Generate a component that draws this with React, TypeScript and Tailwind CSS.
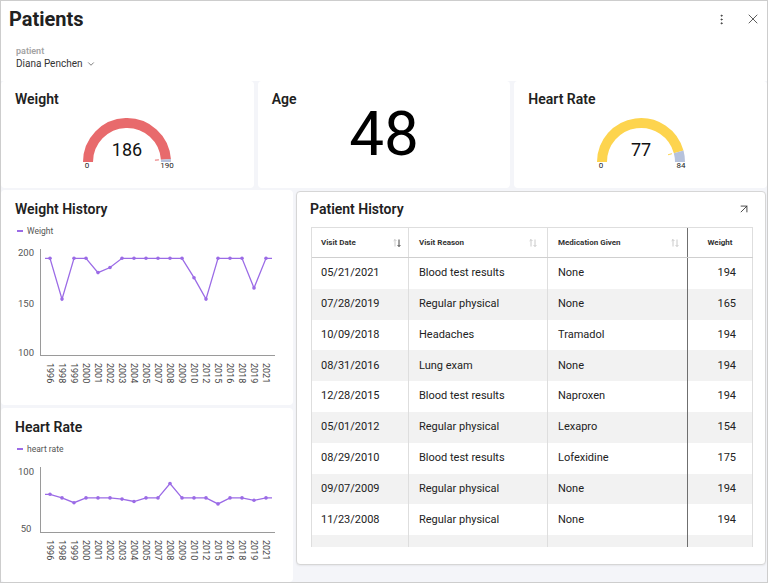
import { ArrowUpRight, EllipsisVertical, X, ChevronDown } from 'lucide-react'

const years = ['1996', '1998', '1999', '2000', '2001', '2002', '2003', '2004', '2005', '2007', '2008', '2009', '2010', '2012', '2015', '2016', '2018', '2019', '2021']
const weights = [194, 154, 194, 194, 180, 185, 194, 194, 194, 194, 194, 194, 175, 154, 194, 194, 194, 165, 194]
const heartRates = [80, 77, 73, 77, 77, 77, 76, 74, 77, 77, 89, 77, 77, 77, 72, 77, 77, 75, 77]

const visits = [
  ['05/21/2021', 'Blood test results', 'None', '194'],
  ['07/28/2019', 'Regular physical', 'None', '165'],
  ['10/09/2018', 'Headaches', 'Tramadol', '194'],
  ['08/31/2016', 'Lung exam', 'None', '194'],
  ['12/28/2015', 'Blood test results', 'Naproxen', '194'],
  ['05/01/2012', 'Regular physical', 'Lexapro', '154'],
  ['08/29/2010', 'Blood test results', 'Lofexidine', '175'],
  ['09/07/2009', 'Regular physical', 'None', '194'],
  ['11/23/2008', 'Regular physical', 'None', '194'],
  ['', '', '', ''],
]

function Gauge({ value, max, color }: { value: number; max: number; color: string }) {
  const cx = 55
  const cy = 50
  const r = 39
  const t = Math.PI * (1 - value / max)
  const vx = cx + r * Math.cos(t)
  const vy = cy - r * Math.sin(t)
  const tick = (rad: number) => [cx + rad * Math.cos(t), cy - rad * Math.sin(t)]
  const [ax, ay] = tick(28)
  const [bx, by] = tick(32)
  return (
    <svg width="110" height="60" viewBox="0 0 110 60">
      <path d={`M ${cx - r} ${cy} A ${r} ${r} 0 0 1 ${vx} ${vy}`} fill="none" stroke={color} strokeWidth="10" />
      <path d={`M ${vx} ${vy} A ${r} ${r} 0 0 1 ${cx + r} ${cy}`} fill="none" stroke="#b6c2dc" strokeWidth="10" />
      <line x1={ax} y1={ay} x2={bx} y2={by} stroke={color} strokeWidth="1" />
      <text x={cx} y="44" textAnchor="middle" fontSize="18" fill="#111">
        {value}
      </text>
      <text x="15" y="56" textAnchor="middle" fontSize="8" fill="#222">
        0
      </text>
      <text x="95" y="56" textAnchor="middle" fontSize="8" fill="#222">
        {max}
      </text>
    </svg>
  )
}

type ChartProps = {
  values: number[]
  offsetY: number
  height: number
  y0: number
  vTop: number
  scale: number
  ticks: { label: string; y: number }[]
  axisTop: number
  axisBottom: number
}

function LineChart({ values, offsetY, height, y0, vTop, scale, ticks, axisTop, axisBottom }: ChartProps) {
  const px = (i: number) => 50 + 12 * i
  const py = (v: number) => y0 + (vTop - v) * scale
  const pts = values.map((v, i) => [px(i), py(v)])
  const d =
    `M 45 ${pts[0][1]} ` + pts.map(([x, y]) => `L ${x} ${y}`).join(' ') + ` L 272 ${pts[pts.length - 1][1]}`
  return (
    <svg width="292" height={height}>
      <g transform={`translate(-1,-${offsetY})`}>
        {ticks.map((t) => (
          <text key={t.label} x="26" y={t.y} textAnchor="middle" dominantBaseline="central" fontSize="9.5" fill="#555">
            {t.label}
          </text>
        ))}
        <line x1="40.5" y1={axisTop} x2="40.5" y2={axisBottom} stroke="#9a9a9a" />
        <line x1="40" y1={axisBottom + 0.5} x2="275" y2={axisBottom + 0.5} stroke="#9a9a9a" />
        <path d={d} fill="none" stroke="#9b6be6" strokeWidth="1.3" />
        {pts.map(([x, y], i) => (
          <circle key={i} cx={x} cy={y} r="1.8" fill="#9b6be6" />
        ))}
        {years.map((yr, i) => (
          <text
            key={yr}
            transform={`translate(${px(i)},${axisBottom + 8}) rotate(90)`}
            dominantBaseline="central"
            fontSize="9"
            fill="#444"
          >
            {yr}
          </text>
        ))}
      </g>
    </svg>
  )
}

function SortIcon({ active }: { active?: boolean }) {
  return (
    <svg width="10" height="10" viewBox="0 0 10 10" fill="none" strokeWidth="0.9">
      <path d="M3 8.5V1.5M1.6 2.9L3 1.5L4.4 2.9" stroke="#c4c4c4" />
      <path d="M7 1.5V8.5M5.6 7.1L7 8.5L8.4 7.1" stroke={active ? '#333' : '#c4c4c4'} />
    </svg>
  )
}

function Legend({ label }: { label: string }) {
  return (
    <div className="flex items-center gap-[4px] h-[12px] pl-[16px]">
      <span className="w-[6px] h-[2px] bg-[#9b6be6]" />
      <span className="text-[8.5px] text-[#555]">{label}</span>
    </div>
  )
}

export default function App() {
  return (
    <div className="w-[768px] h-[583px] border border-[#cdcdcd] bg-[#f4f5f9] flex flex-col overflow-hidden font-['Roboto',sans-serif] text-[#212121]">
      {/* header */}
      <header className="h-[80px] shrink-0 bg-white pl-[8px] pr-[6px] pt-[6px]">
        <div className="flex items-center justify-between h-[24px]">
          <h1 className="text-[20px] leading-[24px] font-bold">Patients</h1>
          <div className="flex items-center gap-[17px] text-[#333]">
            <EllipsisVertical size={13} strokeWidth={1.6} />
            <X size={16} strokeWidth={1.2} />
          </div>
        </div>
        <div className="ml-[7px] mt-[14px]">
          <div className="text-[9px] leading-[12px] font-semibold text-[#a3a3a3]">patient</div>
          <div className="flex items-center gap-[3px] text-[10px] leading-[14px] text-[#333]">
            Diana Penchen
            <ChevronDown size={10} strokeWidth={1.5} />
          </div>
        </div>
      </header>

      {/* kpi row */}
      <div className="grid grid-cols-3 gap-[4px] h-[107px] shrink-0">
        <div className="bg-white rounded-[4px] pt-[9px] flex flex-col">
          <div className="pl-[14px] text-[14px] leading-[18px] font-semibold">Weight</div>
          <div className="flex justify-center mt-[4px]">
            <Gauge value={186} max={190} color="#e86a6c" />
          </div>
        </div>
        <div className="bg-white rounded-[4px] pt-[9px] flex flex-col">
          <div className="pl-[14px] text-[14px] leading-[18px] font-semibold">Age</div>
          <div className="-mt-[5px] text-center text-[62px] leading-[62px] text-black">48</div>
        </div>
        <div className="bg-white rounded-[4px] pt-[9px] flex flex-col">
          <div className="pl-[14px] text-[14px] leading-[18px] font-semibold">Heart Rate</div>
          <div className="flex justify-center mt-[4px]">
            <Gauge value={77} max={84} color="#fdd44e" />
          </div>
        </div>
      </div>

      {/* lower row */}
      <div className="flex gap-[3px] mt-[2px] flex-1 min-h-0">
        <div className="w-[292px] shrink-0 flex flex-col gap-[3px]">
          <div className="h-[215px] shrink-0 bg-white rounded-[4px] pt-[10px]">
            <div className="pl-[14px] text-[14px] leading-[18px] font-semibold">Weight History</div>
            <div className="mt-[7px]">
              <Legend label="Weight" />
            </div>
            <div className="mt-[3px]">
              <LineChart
                values={weights}
                offsetY={241}
                height={160}
                y0={253.2}
                vTop={200}
                scale={1.02}
                ticks={[
                  { label: '200', y: 253.2 },
                  { label: '150', y: 304.2 },
                  { label: '100', y: 353.5 },
                ]}
                axisTop={250}
                axisBottom={356}
              />
            </div>
          </div>
          <div className="flex-1 bg-white rounded-[4px] pt-[10px] overflow-hidden">
            <div className="pl-[14px] text-[14px] leading-[18px] font-semibold">Heart Rate</div>
            <div className="mt-[7px]">
              <Legend label="heart rate" />
            </div>
            <div className="mt-[3px]">
              <LineChart
                values={heartRates}
                offsetY={458}
                height={120}
                y0={470.3}
                vTop={100}
                scale={1.2}
                ticks={[
                  { label: '100', y: 471 },
                  { label: '50', y: 528.5 },
                ]}
                axisTop={467}
                axisBottom={532}
              />
            </div>
          </div>
        </div>

        <div className="w-[470px] h-[374px] mt-[1px] bg-white rounded-[4px] border border-[#d6d6d6] shadow-[0_1px_2px_rgba(0,0,0,0.06)] pt-[8px]">
          <div className="flex items-center justify-between pl-[13px] pr-[14px] h-[18px]">
            <span className="text-[14px] leading-[18px] font-semibold">Patient History</span>
            <ArrowUpRight size={14} strokeWidth={1.5} className="text-[#333]" />
          </div>
          <div className="ml-[14px] mt-[9px] w-[442px] h-[320px] overflow-hidden border-l border-t border-[#dedede]">
            <div className="grid grid-cols-[97px_139px_140px_65px] h-[30px] border-b border-[#cfcfcf] text-[8px] font-bold text-[#333]">
              <div className="flex items-center justify-between pl-[9px] pr-[6px] border-r border-[#dedede]">
                Visit Date <SortIcon active />
              </div>
              <div className="flex items-center justify-between pl-[10px] pr-[9px] border-r border-[#dedede]">
                Visit Reason <SortIcon />
              </div>
              <div className="flex items-center justify-between pl-[10px] pr-[7px] border-r border-[#6f6f6f]">
                Medication Given <SortIcon />
              </div>
              <div className="flex items-center justify-center border-r border-[#dedede]">Weight</div>
            </div>
            {visits.map((row, i) => (
              <div
                key={i}
                className={`grid grid-cols-[97px_139px_140px_65px] h-[30.8px] text-[11px] text-[#222] ${
                  i % 2 === 1 ? 'bg-[#f2f2f2]' : 'bg-white'
                }`}
              >
                <div className="flex items-center pl-[9px] border-r border-[#dedede]">{row[0]}</div>
                <div className="flex items-center pl-[10px] border-r border-[#dedede]">{row[1]}</div>
                <div className="flex items-center pl-[10px] border-r border-[#6f6f6f]">{row[2]}</div>
                <div className="flex items-center justify-end pr-[16px] border-r border-[#dedede]">{row[3]}</div>
              </div>
            ))}
          </div>
        </div>
      </div>
    </div>
  )
}
